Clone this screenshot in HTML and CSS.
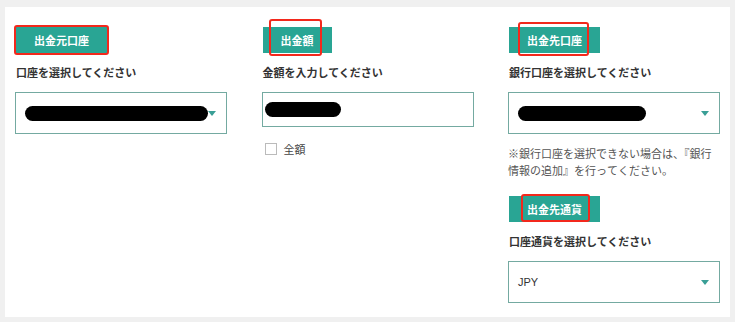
FILE: index.html
```html
<!DOCTYPE html>
<html lang="ja">
<head>
    <meta charset="UTF-8">
    <meta name="viewport" content="width=device-width, initial-scale=1.0">
    <title>出金申請</title>
    <link rel="stylesheet" href="styles.css">
</head>
<body>
    <div class="panel">
        <div class="col">
            <span class="badge">出金元口座<span class="mark mark-1"></span></span>
            <p class="label">口座を選択してください</p>
            <div class="select select-tall">
                <span class="redact redact-1"></span>
                <span class="caret"></span>
            </div>
        </div>

        <div class="col">
            <span class="badge">出金額<span class="mark mark-2"></span></span>
            <p class="label">金額を入力してください</p>
            <div class="input">
                <span class="redact redact-2"></span>
            </div>
            <label class="check"><span class="box"></span>全額</label>
        </div>

        <div class="col">
            <span class="badge">出金先口座<span class="mark mark-3"></span></span>
            <p class="label">銀行口座を選択してください</p>
            <div class="select select-tall">
                <span class="redact redact-3"></span>
                <span class="caret"></span>
            </div>
            <p class="note">※銀行口座を選択できない場合は、『銀行情報の追加』を行ってください。</p>

            <span class="badge badge-second">出金先通貨<span class="mark mark-4"></span></span>
            <p class="label">口座通貨を選択してください</p>
            <div class="select select-tall">
                <span class="value">JPY</span>
                <span class="caret"></span>
            </div>
        </div>
    </div>
</body>
</html>
```

FILE: styles.css
```css
body {
    margin: 0;
    padding: 7px 5px 5px 5px;
    background: #f0f0f0;
    font-family: "Noto Sans CJK JP", "Noto Sans", sans-serif;
    color: #333;
}
.panel {
    background: #fff;
    display: grid;
    grid-template-columns: 212px 212px 212px;
    column-gap: 34.5px;
    padding: 20px 10px 12px 10px;
    box-sizing: border-box;
    width: 725px;
    height: 310px;
}
.col {
    display: flex;
    flex-direction: column;
    align-items: flex-start;
    min-width: 0;
}
.badge {
    position: relative;
    display: inline-block;
    background: #29a594;
    color: #fff;
    font-size: 11px;
    font-weight: 700;
    height: 26px;
    line-height: 26px;
    padding: 0 18px;
    margin-left: 1px;
}
.badge-second {
    margin-top: 17px;
}
.mark {
    position: absolute;
    border: 2px solid #f3281c;
    border-radius: 3px;
}
.mark-1 { left: -2px; right: -2px; top: -2px; bottom: -2px; }
.mark-2 { left: 6px; right: 10px; top: -8px; bottom: -3px; }
.mark-3 { left: 9px; right: 11px; top: -5px; bottom: -3px; }
.mark-4 { left: 12px; right: 10px; top: -2px; bottom: 0; }
.label {
    margin: 11px 0 0 1px;
    font-size: 11px;
    font-weight: 700;
    line-height: 16px;
    color: #333;
}
.select, .input {
    align-self: stretch;
    margin-top: 12px;
    border: 1px solid #74aaa1;
    box-sizing: border-box;
    display: flex;
    align-items: center;
    padding: 0 10px 0 9px;
}
.select-tall {
    height: 42px;
}
.input {
    height: 35px;
    padding-left: 2px;
}
.redact {
    display: block;
    background: #000;
    border-radius: 8px;
    height: 15px;
}
.redact-1 { width: 186px; }
.redact-2 { width: 76px; }
.redact-3 { width: 128px; }
.value {
    font-family: "Liberation Sans", Arial, sans-serif;
    font-size: 11px;
    color: #333;
}
.caret {
    margin-left: auto;
    width: 0;
    height: 0;
    border-left: 4px solid transparent;
    border-right: 4px solid transparent;
    border-top: 5px solid #3a9f96;
}
.select-tall .redact-1 + .caret {
    margin-left: 0;
}
.check {
    display: flex;
    align-items: center;
    margin: 14px 0 0 3px;
    font-size: 11px;
    color: #444;
}
.box {
    width: 10px;
    height: 10px;
    border: 1px solid #bbb;
    margin-right: 7px;
}
.note {
    margin: 11px 0 0 0;
    font-size: 11px;
    line-height: 17px;
    color: #555;
    font-kerning: none;
}
```
